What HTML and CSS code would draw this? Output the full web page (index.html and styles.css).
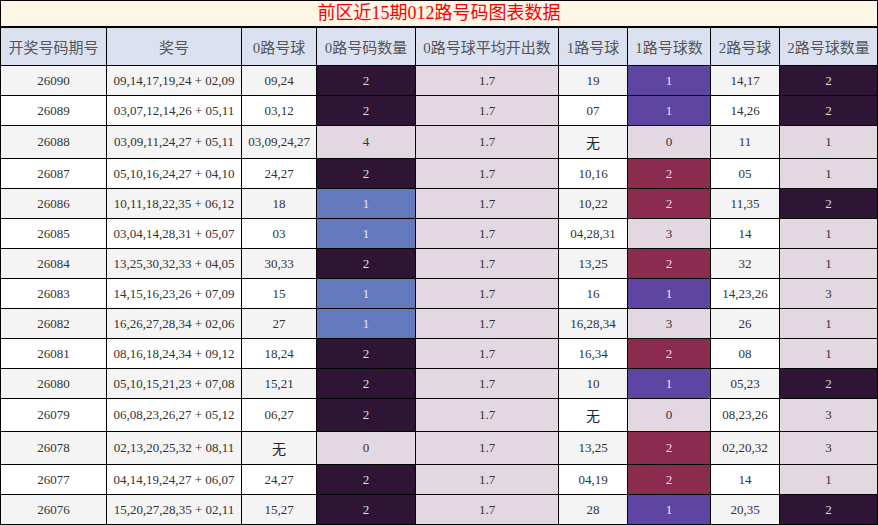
FILE: index.html
```html
<!DOCTYPE html>
<html lang="zh">
<head>
<meta charset="utf-8">
<title>前区近15期012路号码图表数据</title>
<link rel="stylesheet" href="styles.css">
</head>
<body>
<div class="board">
  <div class="title">前区近15期012路号码图表数据</div>
  <table class="grid">
    <colgroup>
      <col class="c1"><col class="c2"><col class="c3"><col class="c4"><col class="c5"><col class="c6"><col class="c7"><col class="c8"><col class="c9">
    </colgroup>
    <thead>
      <tr><th>开奖号码期号</th><th>奖号</th><th>0路号球</th><th>0路号码数量</th><th>0路号球平均开出数</th><th>1路号球</th><th>1路号球数</th><th>2路号球</th><th>2路号球数量</th></tr>
    </thead>
    <tbody>
      <tr class="g"><td>26090</td><td>09,14,17,19,24 + 02,09</td><td>09,24</td><td class="dk">2</td><td class="av">1.7</td><td>19</td><td class="pu">1</td><td>14,17</td><td class="dk">2</td></tr>
      <tr><td>26089</td><td>03,07,12,14,26 + 05,11</td><td>03,12</td><td class="dk">2</td><td class="av">1.7</td><td>07</td><td class="pu">1</td><td>14,26</td><td class="dk">2</td></tr>
      <tr class="g tall"><td>26088</td><td>03,09,11,24,27 + 05,11</td><td>03,09,24,27</td><td class="lt">4</td><td class="av">1.7</td><td><span class="none">无</span></td><td class="lt">0</td><td>11</td><td class="lt">1</td></tr>
      <tr><td>26087</td><td>05,10,16,24,27 + 04,10</td><td>24,27</td><td class="dk">2</td><td class="av">1.7</td><td>10,16</td><td class="cr">2</td><td>05</td><td class="lt">1</td></tr>
      <tr class="g"><td>26086</td><td>10,11,18,22,35 + 06,12</td><td>18</td><td class="bl">1</td><td class="av">1.7</td><td>10,22</td><td class="cr">2</td><td>11,35</td><td class="dk">2</td></tr>
      <tr><td>26085</td><td>03,04,14,28,31 + 05,07</td><td>03</td><td class="bl">1</td><td class="av">1.7</td><td>04,28,31</td><td class="lt">3</td><td>14</td><td class="lt">1</td></tr>
      <tr class="g"><td>26084</td><td>13,25,30,32,33 + 04,05</td><td>30,33</td><td class="dk">2</td><td class="av">1.7</td><td>13,25</td><td class="cr">2</td><td>32</td><td class="lt">1</td></tr>
      <tr><td>26083</td><td>14,15,16,23,26 + 07,09</td><td>15</td><td class="bl">1</td><td class="av">1.7</td><td>16</td><td class="pu">1</td><td>14,23,26</td><td class="lt">3</td></tr>
      <tr class="g"><td>26082</td><td>16,26,27,28,34 + 02,06</td><td>27</td><td class="bl">1</td><td class="av">1.7</td><td>16,28,34</td><td class="lt">3</td><td>26</td><td class="lt">1</td></tr>
      <tr><td>26081</td><td>08,16,18,24,34 + 09,12</td><td>18,24</td><td class="dk">2</td><td class="av">1.7</td><td>16,34</td><td class="cr">2</td><td>08</td><td class="lt">1</td></tr>
      <tr class="g"><td>26080</td><td>05,10,15,21,23 + 07,08</td><td>15,21</td><td class="dk">2</td><td class="av">1.7</td><td>10</td><td class="pu">1</td><td>05,23</td><td class="dk">2</td></tr>
      <tr class="tall"><td>26079</td><td>06,08,23,26,27 + 05,12</td><td>06,27</td><td class="dk">2</td><td class="av">1.7</td><td><span class="none">无</span></td><td class="lt">0</td><td>08,23,26</td><td class="lt">3</td></tr>
      <tr class="g tall"><td>26078</td><td>02,13,20,25,32 + 08,11</td><td><span class="none">无</span></td><td class="lt">0</td><td class="av">1.7</td><td>13,25</td><td class="cr">2</td><td>02,20,32</td><td class="lt">3</td></tr>
      <tr><td>26077</td><td>04,14,19,24,27 + 06,07</td><td>24,27</td><td class="dk">2</td><td class="av">1.7</td><td>04,19</td><td class="cr">2</td><td>14</td><td class="lt">1</td></tr>
      <tr class="g"><td>26076</td><td>15,20,27,28,35 + 02,11</td><td>15,27</td><td class="dk">2</td><td class="av">1.7</td><td>28</td><td class="pu">1</td><td>20,35</td><td class="dk">2</td></tr>
    </tbody>
  </table>
</div>
</body>
</html>
```
FILE: styles.css
```css
html, body {
  margin: 0;
  padding: 0;
  background: #fff;
}
.board {
  width: 878px;
  font-family: "Liberation Serif", "Noto Sans CJK SC", serif;
}
.title {
  box-sizing: border-box;
  height: 27px;
  border: 1px solid #000;
  background: #fdf5e6;
  color: #ff0000;
  font-size: 18px;
  line-height: 25px;
  text-align: center;
}
.grid {
  width: 878px;
  table-layout: fixed;
  border-collapse: separate;
  border-spacing: 0;
  border-left: 1px solid #000;
  border-top: 1px solid #000;
}
.c1 { width: 106px; }
.c2 { width: 135px; }
.c3 { width: 75px; }
.c4 { width: 99px; }
.c5 { width: 143px; }
.c6 { width: 69px; }
.c7 { width: 83px; }
.c8 { width: 69px; }
.c9 { width: 98px; }
.grid th, .grid td {
  box-sizing: border-box;
  padding: 0;
  border-right: 1px solid #000;
  border-bottom: 1px solid #000;
  text-align: center;
  vertical-align: middle;
  white-space: nowrap;
  overflow: hidden;
}
.grid th {
  height: 38px;
  background: #dce1f2;
  color: #555;
  font-size: 15px;
  font-weight: normal;
}
.grid td {
  height: 30px;
  font-size: 13px;
  color: #333;
  background: #fff;
}
.grid tr.g td { background: #f4f4f4; }
.grid tr.tall td { height: 33px; }
.grid tr td.av, .grid tr td.lt { background: #e3d8e2; color: #333; }
.grid tr td.dk { background: #2f1535; color: #ddd; }
.grid tr td.bl { background: #6478bc; color: #e8e8f4; }
.grid tr td.pu { background: #5f45a2; color: #e8e8f4; }
.grid tr td.cr { background: #8b2b4e; color: #e8dde4; }
.none {
  font-family: "Noto Sans CJK SC", sans-serif;
  font-size: 14px;
  color: #222;
}
```
